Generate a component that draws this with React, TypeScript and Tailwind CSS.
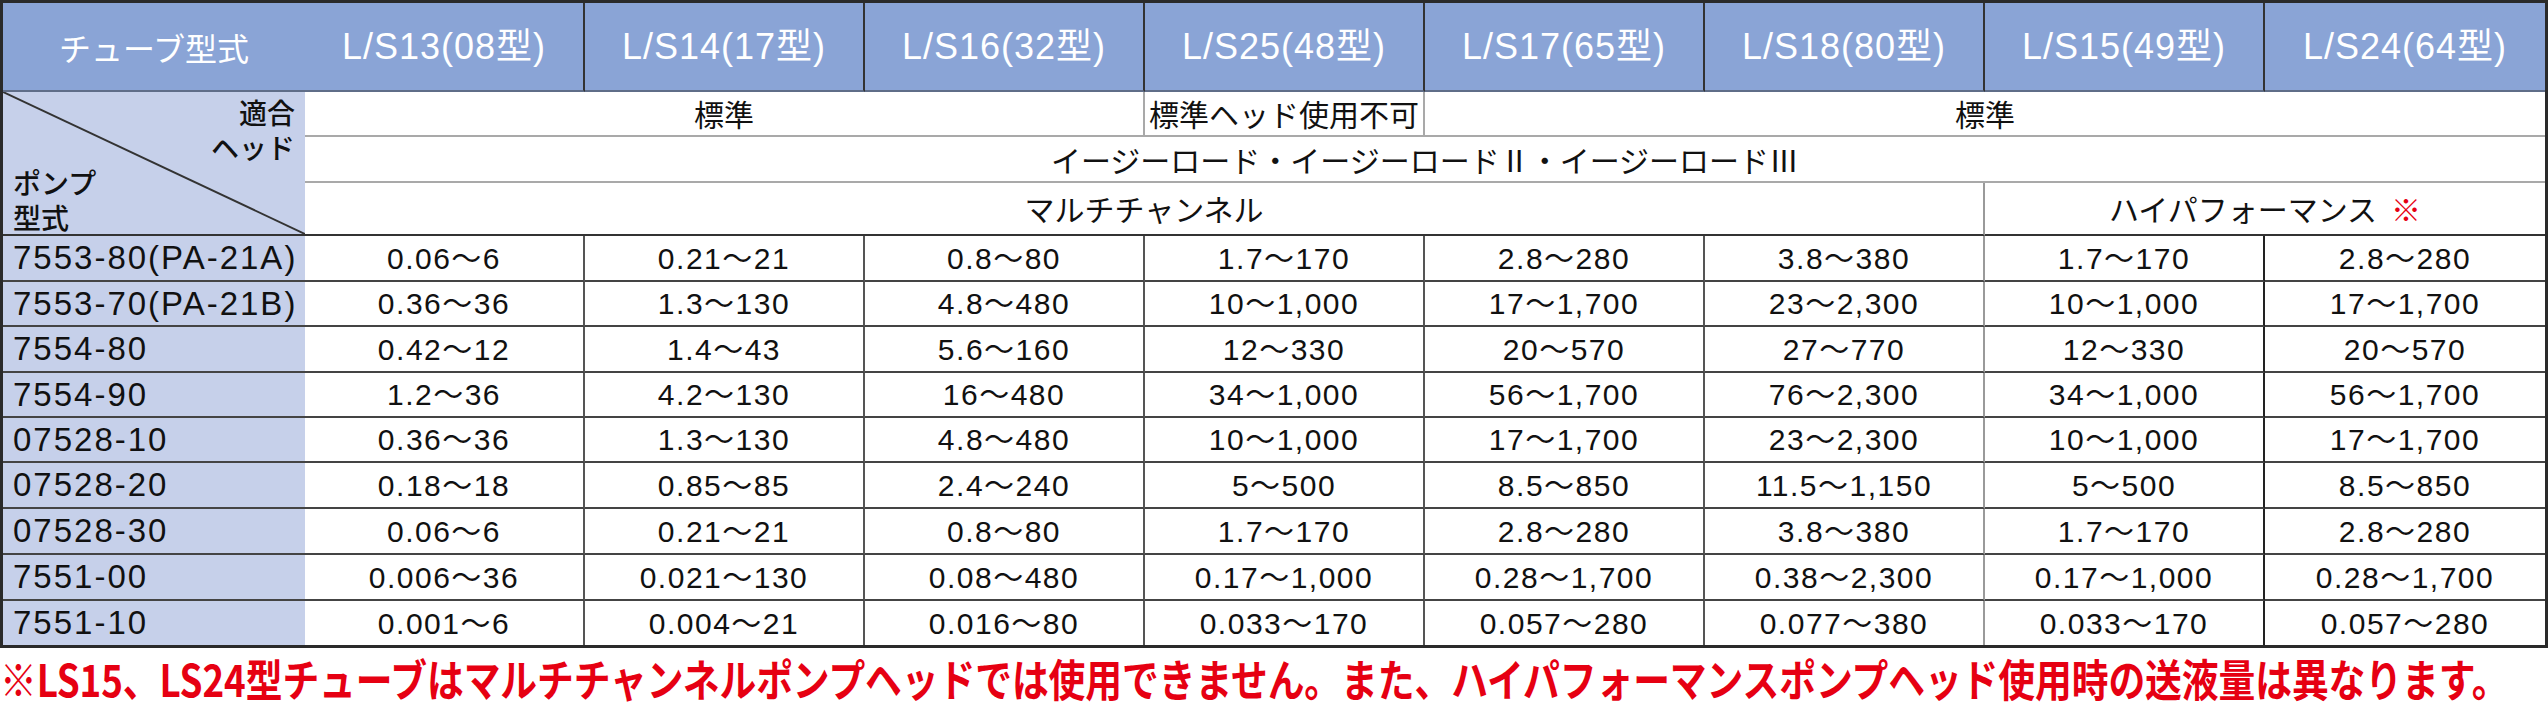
import React from "react";

const tubes = [
    "L/S13(08型)",
    "L/S14(17型)",
    "L/S16(32型)",
    "L/S25(48型)",
    "L/S17(65型)",
    "L/S18(80型)",
    "L/S15(49型)",
    "L/S24(64型)",
];

const pumps: { name: string; values: string[] }[] = [
    { name: "7553-80(PA-21A)", values: ["0.06〜6", "0.21〜21", "0.8〜80", "1.7〜170", "2.8〜280", "3.8〜380", "1.7〜170", "2.8〜280"] },
    { name: "7553-70(PA-21B)", values: ["0.36〜36", "1.3〜130", "4.8〜480", "10〜1,000", "17〜1,700", "23〜2,300", "10〜1,000", "17〜1,700"] },
    { name: "7554-80", values: ["0.42〜12", "1.4〜43", "5.6〜160", "12〜330", "20〜570", "27〜770", "12〜330", "20〜570"] },
    { name: "7554-90", values: ["1.2〜36", "4.2〜130", "16〜480", "34〜1,000", "56〜1,700", "76〜2,300", "34〜1,000", "56〜1,700"] },
    { name: "07528-10", values: ["0.36〜36", "1.3〜130", "4.8〜480", "10〜1,000", "17〜1,700", "23〜2,300", "10〜1,000", "17〜1,700"] },
    { name: "07528-20", values: ["0.18〜18", "0.85〜85", "2.4〜240", "5〜500", "8.5〜850", "11.5〜1,150", "5〜500", "8.5〜850"] },
    { name: "07528-30", values: ["0.06〜6", "0.21〜21", "0.8〜80", "1.7〜170", "2.8〜280", "3.8〜380", "1.7〜170", "2.8〜280"] },
    { name: "7551-00", values: ["0.006〜36", "0.021〜130", "0.08〜480", "0.17〜1,000", "0.28〜1,700", "0.38〜2,300", "0.17〜1,000", "0.28〜1,700"] },
    { name: "7551-10", values: ["0.001〜6", "0.004〜21", "0.016〜80", "0.033〜170", "0.057〜280", "0.077〜380", "0.033〜170", "0.057〜280"] },
];

// right border colour of each value column (last one is the outer border)
const sepColor = [
    "border-[#555]",
    "border-[#555]",
    "border-[#555]",
    "border-[#555]",
    "border-[#555]",
    "border-[#9a9a9a]",
    "border-[#222]",
    "",
];

const latin = "font-['Liberation_Sans','Noto_Sans_CJK_JP',sans-serif]";
const jp = "font-['Noto_Sans_CJK_JP',sans-serif]";

export default function App() {
    return (
        <div className="w-[2548px] h-[709px] bg-white overflow-hidden">
            <div className="grid grid-cols-[302px_repeat(8,280px)] grid-rows-[89px_45px_46px_53px_46px_45px_46px_45px_45px_46px_46px_46px_44px] border-[3px] border-[#2a2a2a] text-[#111]">
                {/* header row */}
                <div className={`flex items-center justify-center bg-[#8aa4d6] border-b-2 border-[#5f6d88] text-white text-[32px] ${jp}`}>
                    チューブ型式
                </div>
                {tubes.map((t, i) => (
                    <div
                        key={t}
                        className={`flex items-center justify-center bg-[#8aa4d6] border-b-2 border-b-[#5f6d88] text-white text-[36px] tracking-[1px] ${latin} ${i < 7 ? "border-r-2 border-r-[#333]" : ""}`}
                    >
                        {t}
                    </div>
                ))}

                {/* corner cell */}
                <div className={`row-span-3 relative bg-[#c6d0ea] border-b-2 border-[#333] pt-[3px] px-[10px] text-[28px] leading-[35px] font-medium ${jp}`}>
                    <svg className="absolute inset-0 w-full h-full" viewBox="0 0 100 100" preserveAspectRatio="none">
                        <line x1="0" y1="0" x2="100" y2="100" stroke="#333" strokeWidth="2" vectorEffect="non-scaling-stroke" />
                    </svg>
                    <div className="text-right">適合</div>
                    <div className="text-right">ヘッド</div>
                    <div>ポンプ</div>
                    <div>型式</div>
                </div>

                {/* 適合ヘッド */}
                <div className={`col-span-3 flex items-center justify-center border-b-2 border-r-2 border-[#a9a9a9] text-[30px] ${jp}`}>標準</div>
                <div className={`flex items-center justify-center border-b-2 border-r-2 border-[#a9a9a9] text-[30px] whitespace-nowrap ${jp}`}>標準ヘッド使用不可</div>
                <div className={`col-span-4 flex items-center justify-center border-b-2 border-[#a9a9a9] text-[30px] ${jp}`}>標準</div>

                <div className={`col-span-8 flex items-center justify-center border-b-2 border-[#a9a9a9] text-[30px] ${jp}`}>
                    イージーロード・イージーロードⅡ・イージーロードⅢ
                </div>

                <div className={`col-span-6 flex items-center justify-center border-b-2 border-b-[#333] border-r-2 border-r-[#9a9a9a] text-[30px] ${jp}`}>
                    マルチチャンネル
                </div>
                <div className={`col-span-2 flex items-center justify-center border-b-2 border-[#333] text-[30px] ${jp}`}>
                    ハイパフォーマンス<span className="ml-[14px] text-[#e60012]">※</span>
                </div>

                {/* data rows */}
                {pumps.map((p, r) => (
                    <React.Fragment key={p.name}>
                        <div
                            className={`flex items-center bg-[#c6d0ea] pl-[10px] text-[33px] tracking-[2px] whitespace-nowrap ${latin} ${r < pumps.length - 1 ? "border-b-2 border-[#444]" : ""}`}
                        >
                            {p.name}
                        </div>
                        {p.values.map((v, c) => (
                            <div
                                key={c}
                                className={`flex items-center justify-center text-[30px] tracking-[1.5px] ${latin} ${r < pumps.length - 1 ? "border-b-2 border-b-[#444]" : ""} ${c < 7 ? `border-r-2 ${sepColor[c]}` : ""}`}
                            >
                                {v}
                            </div>
                        ))}
                    </React.Fragment>
                ))}
            </div>

            <div className="h-[61px] flex items-center">
                <div className={`scale-y-[1.2] whitespace-nowrap text-[36.8px] tracking-[-0.1px] font-bold text-[#e60012] ${jp}`}>
                    ※LS15、LS24型チューブはマルチチャンネルポンプヘッドでは使用できません。また、ハイパフォーマンスポンプヘッド使用時の送液量は異なります。
                </div>
            </div>
        </div>
    );
}
